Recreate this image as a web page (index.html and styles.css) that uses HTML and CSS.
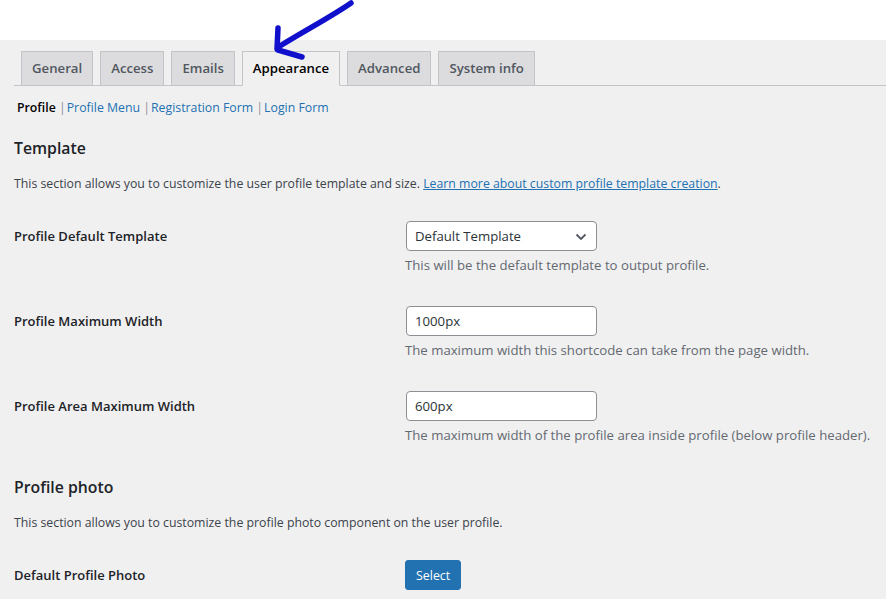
FILE: index.html
```html
<!DOCTYPE html>
<html lang="en">
<head>
  <meta charset="UTF-8" />
  <title>Settings - Appearance</title>
  <meta name="viewport" content="width=device-width, initial-scale=1.0" />
  <link rel="stylesheet" href="styles.css">
</head>
<body>
  <div class="topbar"></div>

  <div class="wrap">
    <nav class="nav-tabs">
      <a class="nav-tab" href="#">General</a>
      <a class="nav-tab" href="#">Access</a>
      <a class="nav-tab" href="#">Emails</a>
      <a class="nav-tab active" href="#">Appearance</a>
      <a class="nav-tab" href="#">Advanced</a>
      <a class="nav-tab" href="#">System info</a>
    </nav>

    <ul class="subsub">
      <li><strong>Profile</strong> |</li>
      <li><a href="#">Profile Menu</a> |</li>
      <li><a href="#">Registration Form</a> |</li>
      <li><a href="#">Login Form</a></li>
    </ul>

    <h2>Template</h2>
    <p class="section-desc">This section allows you to customize the user profile template and size. <a href="#" class="link-u">Learn more about custom profile template creation</a>.</p>

    <div class="form-table">
      <div class="row">
        <label class="label">Profile Default Template</label>
        <div class="field">
          <div class="select">
            <span>Default Template</span>
            <svg class="chevron" width="12" height="8" viewBox="0 0 12 8"><path d="M1.5 1.5 L6 6 L10.5 1.5" fill="none" stroke="#50575e" stroke-width="1.8"/></svg>
          </div>
          <p class="description">This will be the default template to output profile.</p>
        </div>
      </div>

      <div class="row">
        <label class="label">Profile Maximum Width</label>
        <div class="field">
          <input class="text-input" type="text" value="1000px" />
          <p class="description">The maximum width this shortcode can take from the page width.</p>
        </div>
      </div>

      <div class="row">
        <label class="label">Profile Area Maximum Width</label>
        <div class="field">
          <input class="text-input" type="text" value="600px" />
          <p class="description">The maximum width of the profile area inside profile (below profile header).</p>
        </div>
      </div>
    </div>

    <h2>Profile photo</h2>
    <p class="section-desc">This section allows you to customize the profile photo component on the user profile.</p>

    <div class="form-table">
      <div class="row">
        <label class="label">Default Profile Photo</label>
        <div class="field">
          <button class="button-primary">Select</button>
        </div>
      </div>
    </div>
  </div>

  <!-- hand drawn arrow pointing at the Appearance tab -->
  <svg class="arrow" width="100" height="64" viewBox="260 0 100 64">
    <g fill="none" stroke="#1010cc" stroke-width="5.5" stroke-linecap="round" stroke-linejoin="round">
      <path d="M351 3 C 334 15, 306 30, 280 46" />
      <path d="M278 28 L277 49" />
      <path d="M278 50 L302 57" />
    </g>
  </svg>
</body>
</html>
```

FILE: styles.css
```css
body {
  margin: 0;
  background: #f0f0f1;
  color: #3c434a;
  font-family: "Open Sans", sans-serif;
  font-size: 12.3px;
  position: relative;
}

.topbar {
  height: 40px;
  background: #fff;
}

.wrap {
  padding-left: 14px;
}

/* tabs */
.nav-tabs {
  display: flex;
  margin-top: 11px;
  border-bottom: 1px solid #c3c4c7;
}

.nav-tab {
  margin-left: 7px;
  margin-bottom: -1px;
  padding: 5px 10px;
  line-height: 23px;
  font-size: 13.2px;
  font-weight: 600;
  color: #50575e;
  background: #dcdcde;
  border: 1px solid #c3c4c7;
  text-decoration: none;
}

.nav-tab.active {
  background: #f0f0f1;
  border-bottom-color: #f0f0f1;
  color: #000;
}

/* sub nav */
.subsub {
  list-style: none;
  display: flex;
  gap: 1px;
  margin: 12px 0 0 3px;
  padding: 0;
  line-height: 20px;
  color: #8c8f94;
}

.subsub strong {
  color: #000;
  font-weight: 600;
}

.subsub a {
  color: #2271b1;
  text-decoration: none;
}

h2 {
  margin: 19px 0 0;
  font-size: 15.8px;
  line-height: 22px;
  font-weight: 600;
  color: #1d2327;
}

.section-desc {
  margin: 15px 0 0;
  line-height: 20px;
}

.link-u {
  color: #2271b1;
}

h2 + .section-desc + .form-table {
  margin-top: 12px;
}

h2 ~ h2 {
  margin-top: 15px;
}

/* rows */
.row {
  display: grid;
  grid-template-columns: 392px 1fr;
}

.label {
  padding-top: 21px;
  font-size: 13px;
  line-height: 18px;
  font-weight: 600;
  color: #1d2327;
}

.field {
  padding: 15px 0;
}

.select {
  position: relative;
  box-sizing: border-box;
  width: 191px;
  height: 30px;
  padding: 0 24px 0 8px;
  border: 1px solid #8c8f94;
  border-radius: 4px;
  background: #fff;
  font-size: 13.2px;
  line-height: 28px;
  color: #2c3338;
}

.chevron {
  position: absolute;
  right: 9px;
  top: 11px;
}

.text-input {
  box-sizing: border-box;
  width: 191px;
  height: 30px;
  margin: 0;
  padding: 0 8px;
  border: 1px solid #8c8f94;
  border-radius: 4px;
  background: #fff;
  font-family: inherit;
  font-size: 13.2px;
  color: #2c3338;
  display: block;
}

.description {
  margin: 4px 0 0 -1px;
  font-size: 13.2px;
  line-height: 21px;
  color: #646970;
}

.button-primary {
  display: block;
  margin-left: -1px;
  height: 30px;
  padding: 0 10px;
  border: 1px solid #2271b1;
  border-radius: 3px;
  background: #2271b1;
  color: #fff;
  font-family: inherit;
  font-size: 12.4px;
}

.arrow {
  position: absolute;
  top: 0;
  left: 260px;
}
```
